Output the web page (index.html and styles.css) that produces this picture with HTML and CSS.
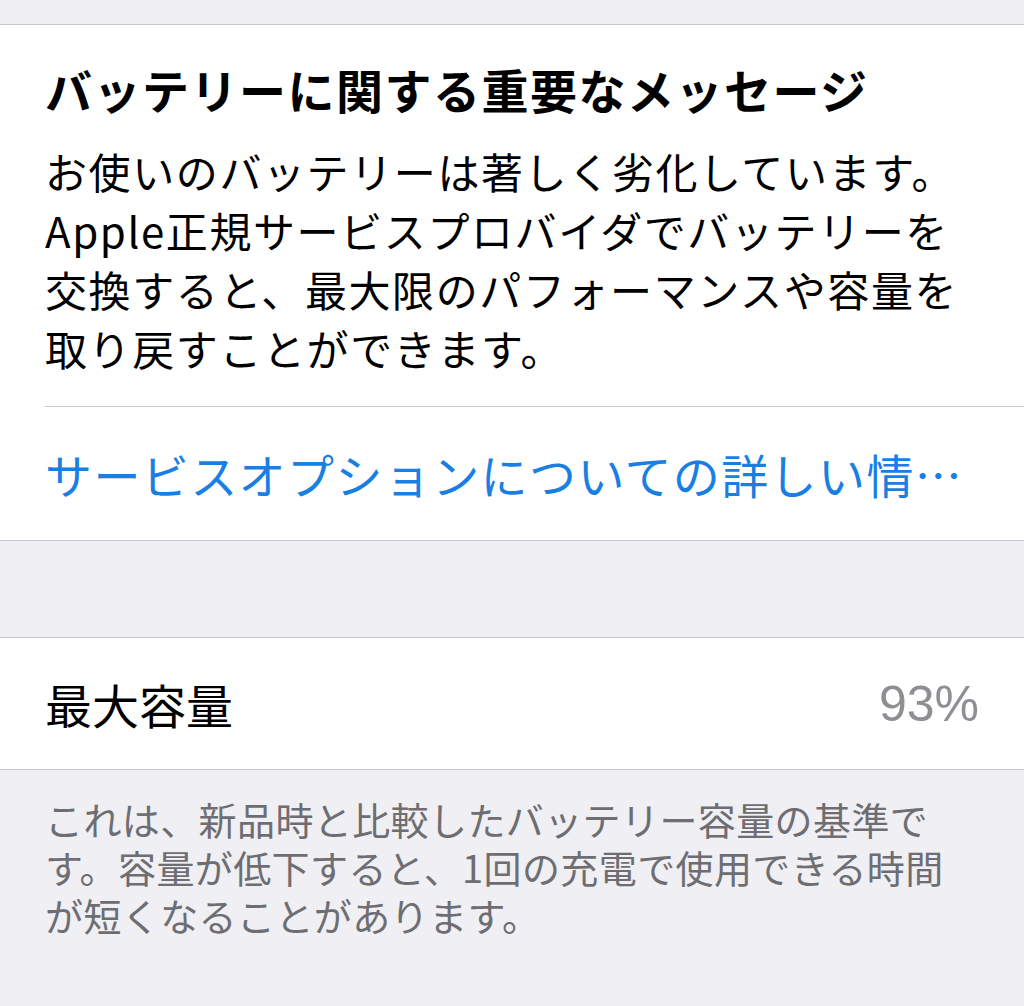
FILE: index.html
```html
<html>
    <head>
        <meta charset="utf-8">
        <title>バッテリー</title>
        <link rel="stylesheet" href="styles.css">
    </head>
    <body>
        <div class="gap top"></div>
        <div class="group">
            <div class="message">
                <h1 class="title">バッテリーに関する重要なメッセージ</h1>
                <p class="body">お使いのバッテリーは著しく劣化しています。Apple正規サービスプロバイダでバッテリーを交換すると、最大限のパフォーマンスや容量を取り戻すことができます。</p>
            </div>
            <div class="link-row">
                <span class="link">サービスオプションについての詳しい情…</span>
            </div>
        </div>
        <div class="gap mid"></div>
        <div class="group">
            <div class="cell">
                <span class="label">最大容量</span>
                <span class="value">93%</span>
            </div>
        </div>
        <p class="footer">これは、新品時と比較したバッテリー容量の基準です。容量が低下すると、1回の充電で使用できる時間が短くなることがあります。</p>
    </body>
</html>
```

FILE: styles.css
```css
body {
    margin: 0;
    background-color: #efeff4;
    font-family: "Noto Sans CJK JP", "Noto Sans", sans-serif;
    color: #000;
}

.gap.top {
    height: 24px;
}

.gap.mid {
    height: 96px;
}

.group {
    background-color: #fff;
    border-top: 1px solid #c8c7cc;
    border-bottom: 1px solid #c8c7cc;
}

.message {
    margin-left: 45px;
    padding: 34px 0 29px 0;
    border-bottom: 1px solid #c8c7cc;
}

.title {
    margin: 0;
    font-size: 47px;
    font-weight: bold;
    letter-spacing: 1.5px;
    line-height: 60px;
    white-space: nowrap;
}

.body {
    margin: 22px 0 0 0;
    font-size: 42px;
    letter-spacing: 1.6px;
    line-height: 59px;
    width: 925px;
}

.link-row {
    height: 133px;
    display: flex;
    align-items: center;
    padding-left: 45px;
}

.link {
    font-size: 47px;
    letter-spacing: 1.4px;
    color: #1a7fe3;
    white-space: nowrap;
}

.cell {
    height: 131px;
    display: flex;
    align-items: center;
    justify-content: space-between;
    padding: 0 45px;
}

.label {
    font-size: 47px;
}

.value {
    font-family: "Liberation Sans", "Noto Sans", sans-serif;
    font-size: 50px;
    color: #8e8e93;
}

.footer {
    margin: 0;
    padding: 25px 45px 0 45px;
    font-size: 38px;
    letter-spacing: 0.4px;
    line-height: 48px;
    color: #6d6d72;
    width: 900px;
}
```
